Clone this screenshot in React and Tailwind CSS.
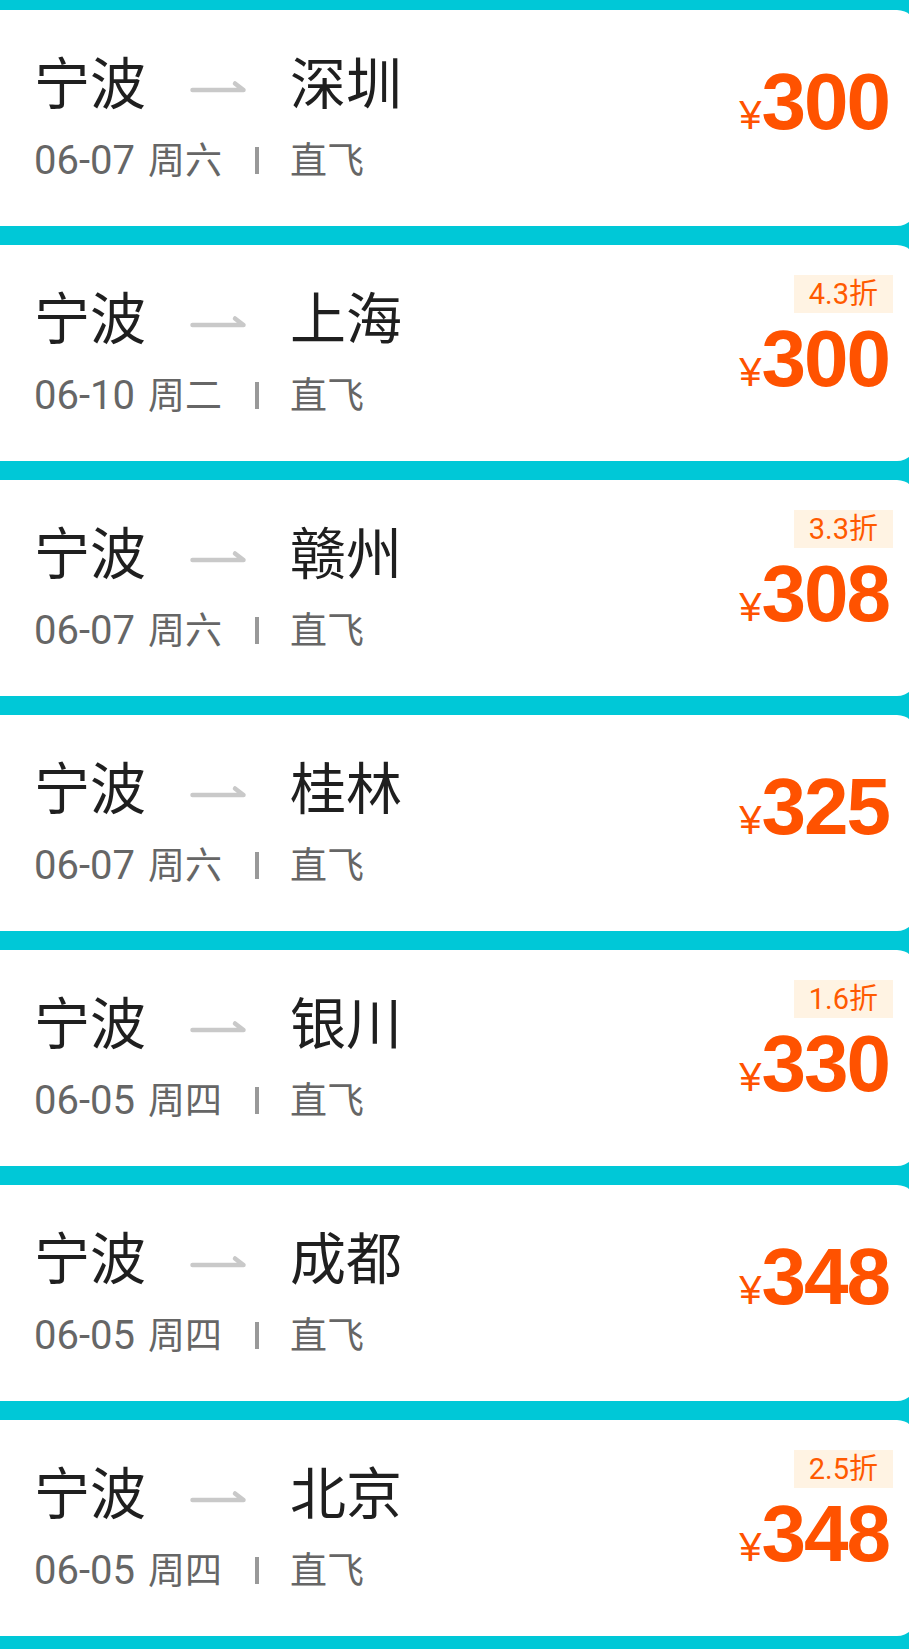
import React from "react";

const flights = [
  { to: "深圳", date: "06-07", week: "周六", price: "300", off: null },
  { to: "上海", date: "06-10", week: "周二", price: "300", off: "4.3折" },
  { to: "赣州", date: "06-07", week: "周六", price: "308", off: "3.3折" },
  { to: "桂林", date: "06-07", week: "周六", price: "325", off: null },
  { to: "银川", date: "06-05", week: "周四", price: "330", off: "1.6折" },
  { to: "成都", date: "06-05", week: "周四", price: "348", off: null },
  { to: "北京", date: "06-05", week: "周四", price: "348", off: "2.5折" },
];

const FONT = { fontFamily: 'Roboto, "Noto Sans CJK SC", sans-serif' };
const PRICE_FONT = { fontFamily: '"Liberation Sans", Arial, sans-serif' };

function Arrow() {
  return (
    <svg width="56" height="14" viewBox="0 0 56 14" className="shrink-0">
      <path
        d="M2.5 10 H53.5 L45 3.5"
        fill="none"
        stroke="#c9c9c9"
        strokeWidth="4.5"
        strokeLinecap="round"
        strokeLinejoin="round"
      />
    </svg>
  );
}

function Card({ f }) {
  return (
    <div
      className="flex h-[216px] w-[917px] shrink-0 justify-between rounded-r-[20px] bg-white pl-[34px] pr-[24px]"
      style={FONT}
    >
      <div className="flex flex-col self-start pt-[47px]">
        <div className="flex h-[56px] items-center text-[56px] leading-[56px] text-[#1f1f1f]">
          <span>宁波</span>
          <span className="ml-[44px] mt-[4px] flex items-center">
            <Arrow />
          </span>
          <span className="ml-[44px]">{f.to}</span>
        </div>
        <div className="mt-[27px] flex h-[41px] items-baseline leading-[41px] text-[#666666]">
          <span className="text-[40px]">{f.date}</span>
          <span className="ml-[13px] text-[37px]">{f.week}</span>
          <span className="ml-[33px] h-[27px] w-[4px] self-center bg-[#999999]" />
          <span className="ml-[31px] text-[37px]">直飞</span>
        </div>
      </div>
      <div className="flex flex-col items-end self-center pb-[32px]">
        {f.off && (
          <div className="mb-[6px] flex h-[38px] items-center bg-[#fff3e3] px-[15px] text-[29px] leading-[38px] text-[#ff5a00]">
            {f.off}
          </div>
        )}
        <div className="flex h-[80px] items-baseline pr-[4px] text-[#ff5200]" style={PRICE_FONT}>
          <span className="text-[40px] leading-[80px]">¥</span>
          <span className="text-[80px] font-bold leading-[80px] tracking-[-2px]">{f.price}</span>
        </div>
      </div>
    </div>
  );
}

export default function App() {
  return (
    <div className="flex h-[1649px] w-[909px] flex-col gap-[19px] overflow-hidden bg-[#00c8d7] pt-[10px]">
      {flights.map((f, i) => (
        <Card key={i} f={f} />
      ))}
    </div>
  );
}
